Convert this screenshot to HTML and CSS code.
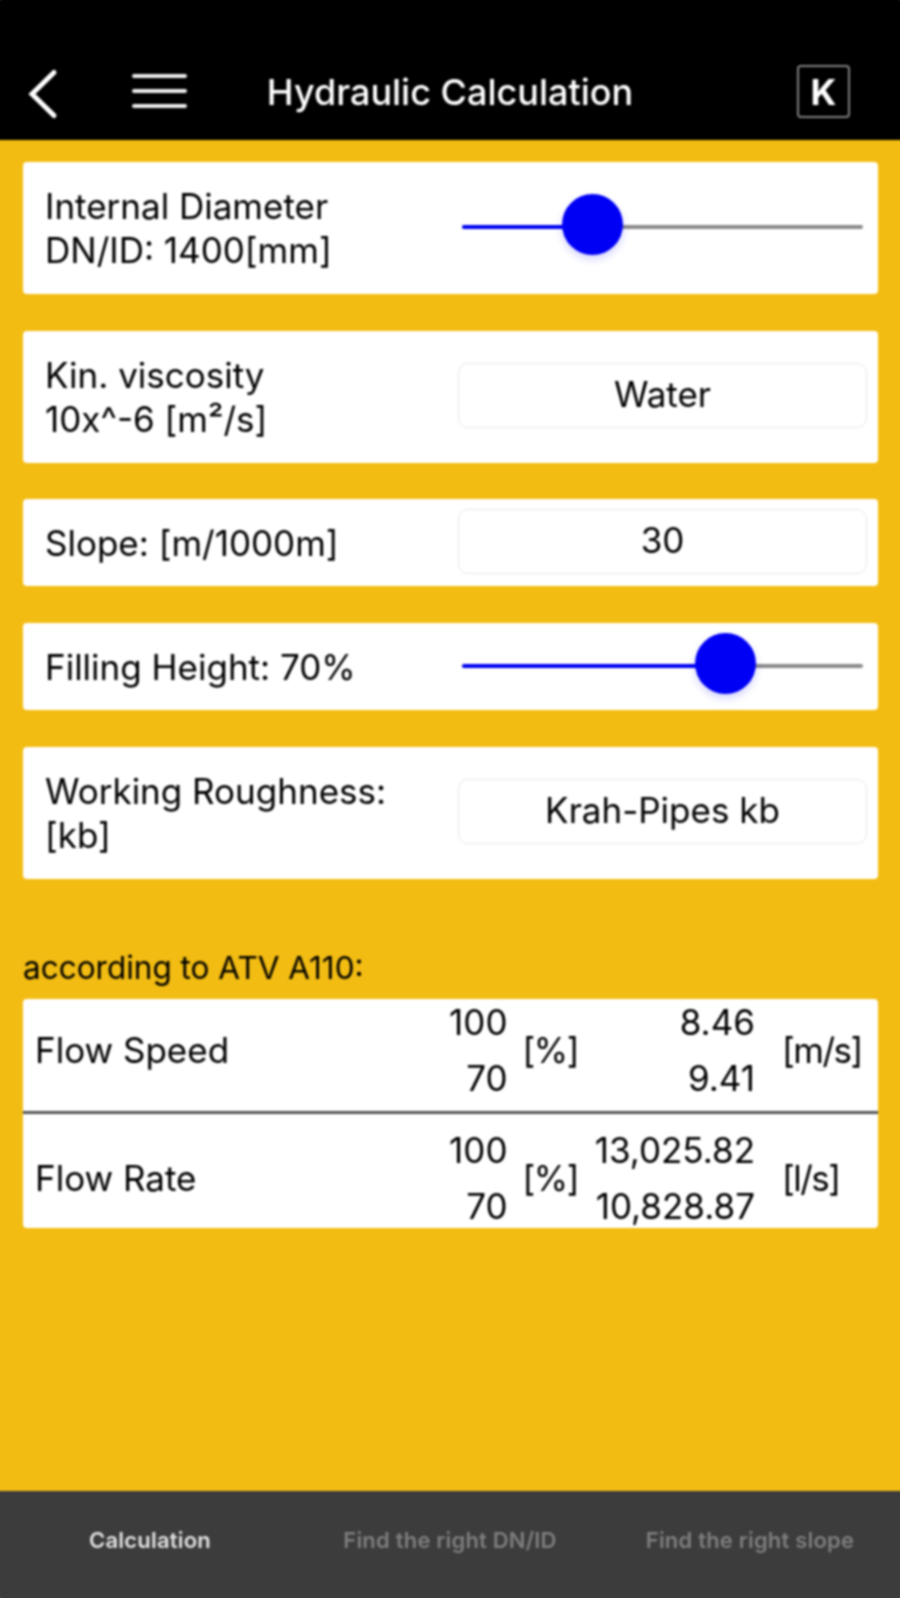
FILE: index.html
```html
<!DOCTYPE html>
<html lang="en">
<head>
<meta charset="utf-8">
<title>Hydraulic Calculation</title>
<link rel="stylesheet" href="styles.css">
</head>
<body>
<div class="app">
  <header class="topbar">
    <svg class="back" width="34" height="52" viewBox="0 0 34 52" aria-hidden="true"><path d="M30 4.5 L8 26 L30 47.5" fill="none" stroke="#fff" stroke-width="5" stroke-linecap="round" stroke-linejoin="miter"/></svg>
    <div class="burger"><span></span><span></span><span></span></div>
    <h1 class="title">Hydraulic Calculation</h1>
    <div class="kbox">K</div>
  </header>
  <main class="content">
    <section class="card tall">
      <div class="label">Internal Diameter<br>DN/ID: 1400[mm]</div>
      <div class="slider"><div class="fill" style="width:32.4%"></div><div class="thumb" style="left:32.4%"></div></div>
    </section>
    <section class="card tall">
      <div class="label">Kin. viscosity<br>10x^-6 [m²/s]</div>
      <div class="field">Water</div>
    </section>
    <section class="card short">
      <div class="label">Slope: [m/1000m]</div>
      <div class="field">30</div>
    </section>
    <section class="card short">
      <div class="label">Filling Height: 70%</div>
      <div class="slider"><div class="fill" style="width:65.5%"></div><div class="thumb" style="left:65.5%"></div></div>
    </section>
    <section class="card tall">
      <div class="label">Working Roughness:<br>[kb]</div>
      <div class="field">Krah-Pipes kb</div>
    </section>
    <h2 class="note">according to ATV A110:</h2>
    <section class="results">
      <div class="row speed">
        <div class="name">Flow Speed</div>
        <div class="nums pct"><span>100</span><span>70</span></div>
        <div class="unit">[%]</div>
        <div class="nums val"><span>8.46</span><span>9.41</span></div>
        <div class="unit">[m/s]</div>
      </div>
      <div class="row rate">
        <div class="name">Flow Rate</div>
        <div class="nums pct"><span>100</span><span>70</span></div>
        <div class="unit">[%]</div>
        <div class="nums val"><span>13,025.82</span><span>10,828.87</span></div>
        <div class="unit">[l/s]</div>
      </div>
    </section>
  </main>
  <nav class="tabs">
    <div class="tab active">Calculation</div>
    <div class="tab">Find the right DN/ID</div>
    <div class="tab">Find the right slope</div>
  </nav>
</div>
</body>
</html>
```
FILE: styles.css
```css
* { box-sizing: border-box; }
html, body { margin: 0; padding: 0; overflow: hidden; }
body { font-family: Inter, "Liberation Sans", sans-serif; color: #000; background: #f2bc12; }
.app { width: 900px; height: 1598px; display: flex; flex-direction: column; filter: blur(0.8px); }

.topbar { height: 140px; flex: none; background: #000; box-shadow: 0 -8px 0 #000, -8px 0 0 #000, 8px 0 0 #000; position: relative; z-index: 1; display: flex; align-items: center; padding: 46px 0 0 24px; }
.back { flex: none; margin-top: 1px; }
.burger { flex: none; margin: 0 0 4px 74px; width: 55px; display: flex; flex-direction: column; gap: 11px; }
.burger span { display: block; height: 4px; background: #eeeeee; border-radius: 2px; }
.title { position: absolute; left: 0; right: 0; top: 70px; margin: 0; text-align: center; color: #fff; font-size: 36px; line-height: 44px; font-weight: 500; }
.kbox { position: absolute; left: 797px; top: 65px; width: 53px; height: 53px; border: 2px solid #808080; border-radius: 4px; color: #fff; font-size: 36px; line-height: 50px; font-weight: 700; text-align: center; }

.content { flex: 1; padding: 22px 22px 0 23px; background: #f2bc12; box-shadow: -8px 0 0 #f2bc12, 8px 0 0 #f2bc12; display: flex; flex-direction: column; }
.card { background: #fff; border-radius: 4px; display: flex; align-items: center; padding: 0 11px 0 22px; margin-bottom: 36.7px; }
.card.tall { height: 132px; }
.card.short { height: 87px; }
.label { width: 413px; flex: none; font-size: 35px; line-height: 44px; color: #000; }

.field { width: 409px; height: 65px; margin-top: -2px; padding-bottom: 3px; background: #fff; border: 1px solid #e8e8e8; border-radius: 10px; display: flex; align-items: center; justify-content: center; font-size: 35px; color: #000; }

.slider { position: relative; width: 401px; height: 4px; margin: -2px 0 0 4px; background: #8a8a8a; border-radius: 2px; }
.fill { height: 100%; background: #0000f0; border-radius: 2px; }
.thumb { position: absolute; top: -31px; width: 61px; height: 61px; margin-left: -30px; background: #0000f5; border-radius: 50%; box-shadow: 0 4px 8px rgba(0, 0, 245, 0.18); }

.note { margin: 31px 0 9px; font-size: 31.5px; line-height: 44px; font-weight: 400; color: #000; }

.results { background: #fff; border-radius: 4px; height: 229px; display: flex; flex-direction: column; }
.row { display: grid; grid-template-columns: 348.5px 124px 63px 184.5px 1fr; align-items: center; padding-left: 12px; color: #000; font-size: 35px; }
.row.speed { height: 113px; padding-bottom: 11px; }
.row.rate { flex: 1; border-top: 3px solid #555; padding-top: 14px; }
.name { line-height: 44px; }
.nums { display: flex; flex-direction: column; align-items: flex-end; gap: 12px; line-height: 44px; }
.unit { line-height: 44px; letter-spacing: -1.5px; }
.pct + .unit { padding-left: 15px; }
.val + .unit { padding-left: 27px; }

.tabs { height: 107px; flex: none; background: #3c3c3c; box-shadow: 0 8px 0 #3c3c3c, -8px 0 0 #3c3c3c, 8px 0 0 #3c3c3c; display: grid; grid-template-columns: repeat(3, 300px); align-items: center; padding-bottom: 10px; }
.tab { text-align: center; font-size: 22px; font-weight: 600; color: #7e7e7e; letter-spacing: 0.2px; }
.tab.active { color: #e2e2e2; }
```
